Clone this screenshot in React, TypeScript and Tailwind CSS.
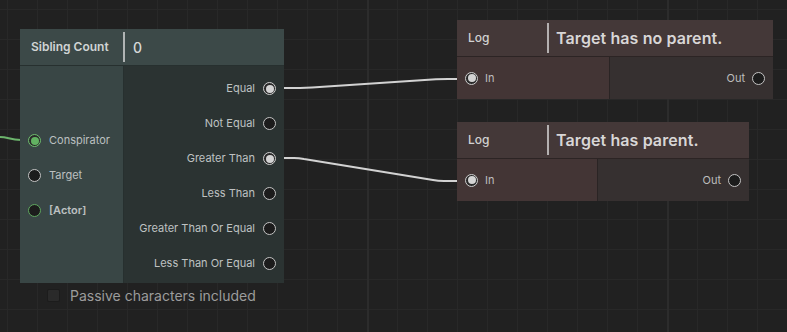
import React from "react";

type PortState = "idle" | "linked" | "green" | "greenRing";

const Port: React.FC<{ state?: PortState }> = ({ state = "idle" }) => {
  if (state === "linked") {
    return (
      <span className="w-[13px] h-[13px] rounded-full border-[1.5px] border-[#cfcfcf] bg-[#2a2a2a] flex items-center justify-center shrink-0">
        <span className="w-[8px] h-[8px] rounded-full bg-[#d4d4d4]" />
      </span>
    );
  }
  if (state === "green") {
    return (
      <span className="w-[13px] h-[13px] rounded-full border-[1.5px] border-[#6fbf6f] bg-[#2a2a2a] flex items-center justify-center shrink-0">
        <span className="w-[8px] h-[8px] rounded-full bg-[#62b262]" />
      </span>
    );
  }
  return (
    <span
      className={
        "w-[13px] h-[13px] rounded-full border-[1.5px] bg-[#1c1c1c] shrink-0 " +
        (state === "greenRing" ? "border-[#5fa85f]" : "border-[#c4c4c4]")
      }
    />
  );
};

const outputs = [
  { label: "Equal", linked: true },
  { label: "Not Equal", linked: false },
  { label: "Greater Than", linked: true },
  { label: "Less Than", linked: false },
  { label: "Greater Than Or Equal", linked: false },
  { label: "Less Than Or Equal", linked: false },
];

const inputs: { label: string; state: PortState; bold?: boolean }[] = [
  { label: "Conspirator", state: "green" },
  { label: "Target", state: "idle" },
  { label: "[Actor]", state: "greenRing", bold: true },
];

const Grid: React.FC = () => {
  const vx: number[] = [];
  for (let x = 7.5; x < 787; x += 30) vx.push(x);
  const hy: number[] = [];
  for (let y = 9.5; y < 332; y += 30) hy.push(y);
  return (
    <svg className="absolute inset-0" width={787} height={332}>
      {vx.map((x) => (
        <line key={"v" + x} x1={x} y1={0} x2={x} y2={332} stroke="#282828" strokeWidth={1} />
      ))}
      {hy.map((y) => (
        <line key={"h" + y} x1={0} y1={y} x2={787} y2={y} stroke="#282828" strokeWidth={1} />
      ))}
      <line x1={368} y1={0} x2={368} y2={332} stroke="#2c2c2c" strokeWidth={2} />
      <line x1={668} y1={0} x2={668} y2={332} stroke="#2c2c2c" strokeWidth={2} />
    </svg>
  );
};

const Wires: React.FC = () => (
  <svg className="absolute inset-0 pointer-events-none" width={787} height={332}>
    <path d="M0,137 C8,137 10,140 21,140" fill="none" stroke="#6cb46c" strokeWidth={2} />
    <path
      d="M284,88 L300,88 Q306,88 312,87.6 L436,79.2 Q442,79 448,79 L458,79"
      fill="none"
      stroke="#d2d2d2"
      strokeWidth={2}
    />
    <path
      d="M284,158 L294,158 Q299,158 304,159 L433,180 Q438,181 444,181 L458,181"
      fill="none"
      stroke="#d2d2d2"
      strokeWidth={2}
    />
  </svg>
);

const LogNode: React.FC<{ top: number; width: number; leftW: number; message: string }> = ({
  top,
  width,
  leftW,
  message,
}) => (
  <div className="absolute left-[457px] flex flex-col" style={{ top, width }}>
    <div className="h-[37px] bg-[#443838] flex items-center border-b border-[#2c2424]">
      <div className="w-[90px] pl-[11px] text-[12px] font-medium text-[#d2d2d2]">Log</div>
      <div className="w-[2px] h-[30px] bg-[#b4b0b0]" />
      <div className="pl-[7px] text-[16px] font-semibold text-[#d8d6d6] tracking-[0.1px]">{message}</div>
    </div>
    <div className="h-[42px] flex">
      <div className="bg-[#433535] flex items-center gap-[7px] pl-[8px] border-r border-[#2a2424]" style={{ width: leftW }}>
        <Port state="linked" />
        <span className="text-[11px] text-[#bdbdbd]">In</span>
      </div>
      <div className="flex-1 bg-[#363030] flex items-center justify-end gap-[7px] pr-[8px]">
        <span className="text-[11px] text-[#bdbdbd]">Out</span>
        <Port />
      </div>
    </div>
  </div>
);

export default function App() {
  return (
    <div
      className="relative w-[787px] h-[332px] overflow-hidden bg-[#212121]"
      style={{ fontFamily: "Inter, 'Noto Sans', sans-serif" }}
    >
      <Grid />
      <Wires />

      {/* Sibling Count node */}
      <div className="absolute left-[20px] top-[29px] w-[264px] flex flex-col">
        <div className="h-[37px] bg-[#3c4948] flex items-center border-b border-[#27302f]">
          <div className="w-[103px] pl-[11px] text-[12px] font-semibold text-[#d0d4d4]">Sibling Count</div>
          <div className="w-[2px] h-[30px] bg-[#b0b4b4]" />
          <div className="pl-[8px] text-[14px] font-medium text-[#d6d8d8]">0</div>
        </div>
        <div className="h-[217px] flex">
          <div className="w-[104px] bg-[#394645] flex flex-col pt-[57px] border-r border-[#27302f]">
            {inputs.map((p) => (
              <div key={p.label} className="h-[35px] flex items-center gap-[8px] pl-[8px]">
                <Port state={p.state} />
                <span className={"text-[11px] text-[#bcc0c0] " + (p.bold ? "font-semibold" : "")}>{p.label}</span>
              </div>
            ))}
          </div>
          <div className="flex-1 bg-[#2b3332] flex flex-col pt-[5px]">
            {outputs.map((p) => (
              <div key={p.label} className="h-[35px] flex items-center justify-end gap-[8px] pr-[8px]">
                <span className="text-[11px] text-[#bfc2c2]">{p.label}</span>
                <Port state={p.linked ? "linked" : "idle"} />
              </div>
            ))}
          </div>
        </div>
      </div>

      <label className="absolute left-[47px] top-[285px] flex items-center gap-[10px]">
        <span className="w-[13px] h-[13px] bg-[#2a2a2a] border border-[#1c1c1c] rounded-[2px]" />
        <span className="text-[14px] text-[#9c9c9c]">Passive characters included</span>
      </label>

      <LogNode top={20} width={316} leftW={153} message="Target has no parent." />
      <LogNode top={122} width={292} leftW={141} message="Target has parent." />
    </div>
  );
}
